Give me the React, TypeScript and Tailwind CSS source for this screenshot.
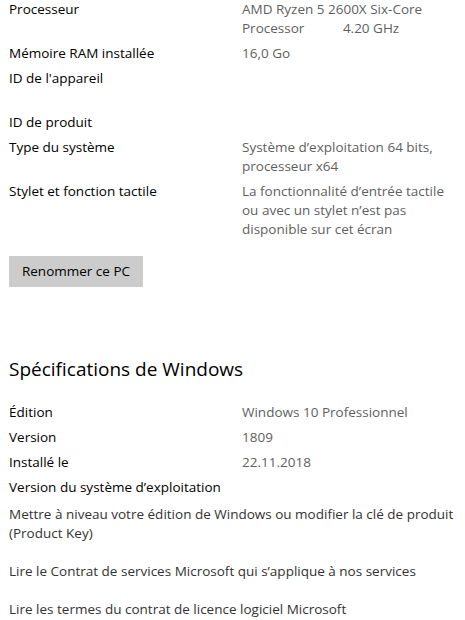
const specs = [
  { label: 'Processeur', value: ['AMD Ryzen 5 2600X Six-Core', 'Processor           4.20 GHz'] },
  { label: 'Mémoire RAM installée', value: ['16,0 Go'] },
  { label: "ID de l'appareil", value: ['', ''] },
  { label: 'ID de produit', value: [''] },
  { label: 'Type du système', value: ['Système d’exploitation 64 bits,', 'processeur x64'] },
  {
    label: 'Stylet et fonction tactile',
    value: ['La fonctionnalité d’entrée tactile', 'ou avec un stylet n’est pas', 'disponible sur cet écran'],
  },
];

const windowsSpecs = [
  { label: 'Édition', value: 'Windows 10 Professionnel' },
  { label: 'Version', value: '1809' },
  { label: 'Installé le', value: '22.11.2018' },
  { label: 'Version du système d’exploitation', value: '' },
];

function Row({ label, lines }: { label: string; lines: string[] }) {
  return (
    <div className="flex pb-[6px]">
      <div className="w-[233px] shrink-0 whitespace-nowrap text-black">{label}</div>
      <div className="text-[#5f5f5f]">
        {lines.map((line, i) => (
          <div key={i} className="h-[19px] whitespace-pre">
            {line}
          </div>
        ))}
      </div>
    </div>
  );
}

export default function App() {
  return (
    <div
      className="min-h-[620px] w-[465px] bg-white pl-[9px] text-[13.5px] leading-[19px]"
      style={{ fontFamily: '"Open Sans", "Noto Sans", sans-serif' }}
    >
      <div>
        {specs.map((s) => (
          <Row key={s.label} label={s.label} lines={s.value} />
        ))}
      </div>

      <button className="mt-[11px] h-[31px] w-[134px] bg-[#cccccc] text-black">Renommer ce PC</button>

      <h2 className="mt-[69px] text-[19px] leading-[26px] font-normal text-black">Spécifications de Windows</h2>

      <div className="mt-[21px]">
        {windowsSpecs.map((s) => (
          <Row key={s.label} label={s.label} lines={[s.value]} />
        ))}
      </div>

      <div className="mt-[2px] flex flex-col gap-[19px] text-[#333333]">
        <div className="whitespace-nowrap">
          Mettre à niveau votre édition de Windows ou modifier la clé de produit
          <br />
          (Product Key)
        </div>
        <div>Lire le Contrat de services Microsoft qui s’applique à nos services</div>
        <div>Lire les termes du contrat de licence logiciel Microsoft</div>
      </div>
    </div>
  );
}
